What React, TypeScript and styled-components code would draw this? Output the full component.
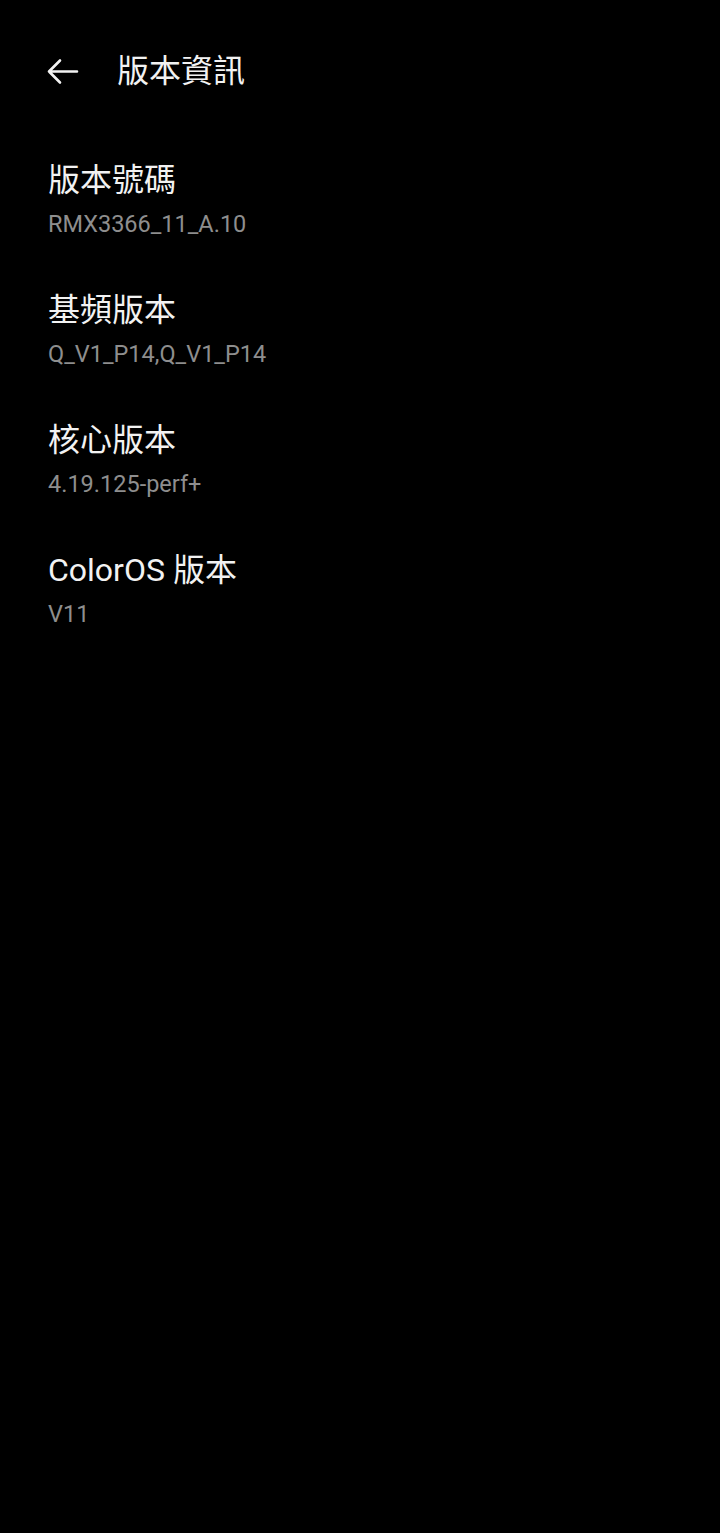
import React from "react";
import styled, { createGlobalStyle } from "styled-components";

const Global = createGlobalStyle`
  html, body { margin: 0; padding: 0; background: #000; }
  body { font-family: Roboto, "Noto Sans CJK TC", sans-serif; }
  #root { min-height: 1533px; background: #000; }
`;

const Page = styled.div`
  width: 720px;
  min-height: 1533px;
  background: #000;
  display: flex;
  flex-direction: column;
`;

const Header = styled.header`
  height: 142px;
  display: flex;
  align-items: center;
  padding-left: 46px;
  gap: 38px;
`;

const BackButton = styled.button`
  background: none;
  border: none;
  padding: 0;
  width: 33px;
  height: 33px;
  display: flex;
  align-items: center;
  justify-content: center;
  cursor: pointer;
`;

const Title = styled.h1`
  margin: 0;
  font-family: Roboto, "Noto Sans CJK TC", sans-serif;
  font-weight: 400;
  font-size: 32px;
  line-height: 40px;
  color: #f2f2f2;
`;

const List = styled.div`
  display: flex;
  flex-direction: column;
`;

const Item = styled.div`
  padding: 18px 48px 33px;
  display: flex;
  flex-direction: column;
  gap: 9px;
`;

const ItemTitle = styled.div`
  font-family: Roboto, "Noto Sans CJK TC", sans-serif;
  font-size: 32px;
  line-height: 40px;
  color: #f2f2f2;
`;

const ItemValue = styled.div`
  font-family: Roboto, "Noto Sans CJK TC", sans-serif;
  font-size: 23.5px;
  line-height: 30px;
  color: #8e8e8e;
`;

const items = [
  { title: "版本號碼", value: "RMX3366_11_A.10" },
  { title: "基頻版本", value: "Q_V1_P14,Q_V1_P14" },
  { title: "核心版本", value: "4.19.125-perf+" },
  { title: "ColorOS 版本", value: "V11" },
];

export default function App() {
  return (
    <Page>
      <Global />
      <Header>
        <BackButton aria-label="back">
          <svg width="33" height="33" viewBox="0 0 33 33" fill="none">
            <path
              d="M31 16.5H3M14 5.5L3 16.5L14 27.5"
              stroke="#f2f2f2"
              strokeWidth="2.6"
              strokeLinecap="round"
              strokeLinejoin="round"
            />
          </svg>
        </BackButton>
        <Title>版本資訊</Title>
      </Header>
      <List>
        {items.map((it) => (
          <Item key={it.title}>
            <ItemTitle>{it.title}</ItemTitle>
            <ItemValue>{it.value}</ItemValue>
          </Item>
        ))}
      </List>
    </Page>
  );
}
